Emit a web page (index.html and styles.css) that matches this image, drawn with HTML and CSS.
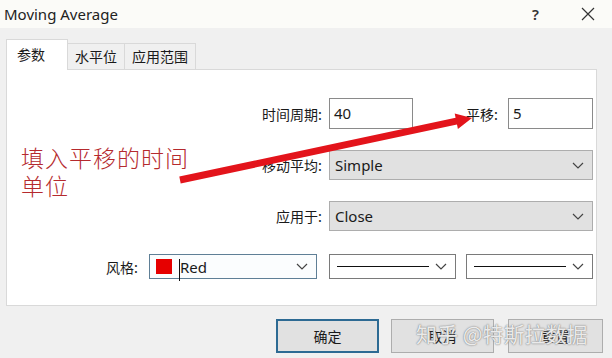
FILE: index.html
```html
<!DOCTYPE html>
<html lang="zh">
<head>
  <meta charset="UTF-8" />
  <title>Moving Average</title>
  <link rel="stylesheet" href="styles.css">
</head>
<body>
  <div class="window">
    <div class="titlebar">
      <span class="title">Moving Average</span>
      <span class="help">?</span>
      <svg class="close" width="14" height="14" viewBox="0 0 14 14">
        <path d="M1 1L13 13M13 1L1 13" stroke="#333" stroke-width="1.2" fill="none"/>
      </svg>
    </div>

    <div class="tabs">
      <div class="tab active">参数</div>
      <div class="tab">水平位</div>
      <div class="tab">应用范围</div>
    </div>

    <div class="panel">
      <div class="form-row">
        <label>时间周期:</label>
        <div class="pair">
          <div class="textbox small">40</div>
          <div class="shift">
            <label>平移:</label>
            <div class="textbox small2">5</div>
          </div>
        </div>
      </div>
      <div class="form-row">
        <label>移动平均:</label>
        <div class="combo">Simple<svg class="chev" width="12" height="7" viewBox="0 0 12 7"><polyline points="1,1 6,6 11,1" fill="none" stroke="#444" stroke-width="1.2"/></svg></div>
      </div>
      <div class="form-row">
        <label>应用于:</label>
        <div class="combo">Close<svg class="chev" width="12" height="7" viewBox="0 0 12 7"><polyline points="1,1 6,6 11,1" fill="none" stroke="#444" stroke-width="1.2"/></svg></div>
      </div>
      <div class="style-row">
        <label>风格:</label>
        <div class="pick color-pick">
          <span class="swatch"></span>
          <span class="caret"></span>
          <span class="pick-text">Red</span>
          <svg class="chev" width="12" height="7" viewBox="0 0 12 7"><polyline points="1,1 6,6 11,1" fill="none" stroke="#444" stroke-width="1.2"/></svg>
        </div>
        <div class="pick line-pick">
          <span class="line"></span>
          <svg class="chev" width="12" height="7" viewBox="0 0 12 7"><polyline points="1,1 6,6 11,1" fill="none" stroke="#444" stroke-width="1.2"/></svg>
        </div>
        <div class="pick line-pick">
          <span class="line"></span>
          <svg class="chev" width="12" height="7" viewBox="0 0 12 7"><polyline points="1,1 6,6 11,1" fill="none" stroke="#444" stroke-width="1.2"/></svg>
        </div>
      </div>
    </div>

    <div class="buttons">
      <button class="btn default">确定</button>
      <button class="btn">取消</button>
      <button class="btn last">重置</button>
    </div>
  </div>

  <!-- annotation drawn over the dialog -->
  <div class="note">填入平移的时间<br>单位</div>
  <svg class="arrow" width="612" height="358" viewBox="0 0 612 358">
    <polygon points="179.3,176.6 455.6,117.8 454.7,113.4 472,118 457.9,129 457,124.6 180.7,183.4" fill="#e3141b"/>
  </svg>
  <div class="watermark">知乎 @特斯拉数据</div>
</body>
</html>
```

FILE: styles.css
```css
* {
  box-sizing: border-box;
}

body {
  margin: 0;
  width: 612px;
  height: 358px;
  overflow: hidden;
  background: #f0f0f0;
  font-family: "Noto Sans", "Noto Sans CJK SC", sans-serif;
  font-size: 14px;
  color: #1a1a1a;
  position: relative;
}

.titlebar {
  height: 28px;
  background: #fbfbf8;
  display: flex;
  align-items: center;
  padding-left: 4px;
}

.title {
  font-size: 15px;
  color: #222;
  flex: 1;
}

.help {
  font-size: 15px;
  font-weight: 600;
  color: #333;
  margin-right: 42px;
}

.close {
  margin-right: 17px;
}

.tabs {
  display: flex;
  align-items: flex-end;
  padding: 11px 0 0 6px;
  height: 41px;
}

.tab {
  height: 26px;
  padding: 0 7px;
  border: 1px solid #d9d9d9;
  border-bottom: none;
  border-left: none;
  background: #f0f0f0;
  font-family: "Noto Sans CJK SC", sans-serif;
  font-size: 14px;
  line-height: 25px;
}

.tab.active {
  width: 62px;
  height: 31px;
  padding-left: 10px;
  border-left: 1px solid #d9d9d9;
  background: #fff;
  margin-bottom: -1px;
  position: relative;
  z-index: 1;
  line-height: 28px;
}

.panel {
  margin: 0 15px 0 6px;
  height: 237px;
  background: #fff;
  border: 1px solid #d9d9d9;
  padding: 28px 3px 0 0;
}

.form-row {
  display: grid;
  grid-template-columns: 1fr 264px;
  column-gap: 7px;
  align-items: center;
  margin-bottom: 21px;
}

.form-row:nth-child(3) {
  margin-bottom: 23px;
}

label {
  text-align: right;
  font-family: "Noto Sans CJK SC", sans-serif;
  font-size: 14px;
}

.pair {
  display: flex;
  justify-content: space-between;
  align-items: center;
}

.shift {
  display: flex;
  align-items: center;
  gap: 10px;
}

.textbox {
  height: 31px;
  border: 1px solid #8a8a8a;
  background: #fff;
  padding-left: 4px;
  font-size: 15px;
  line-height: 28px;
}

.small {
  width: 84px;
}

.small2 {
  width: 85px;
}

.combo {
  height: 30px;
  background: #e1e1e1;
  border: 1px solid #adadad;
  display: flex;
  align-items: center;
  justify-content: space-between;
  padding: 0 8px 0 5px;
  font-size: 15px;
}

.style-row {
  display: flex;
  justify-content: flex-end;
  align-items: center;
}

.style-row label {
  margin-right: 11px;
}

.pick {
  height: 25px;
  border: 1px solid #7a7a7a;
  background: #fff;
  display: flex;
  align-items: center;
  padding: 0 8px 0 6px;
  position: relative;
}

.color-pick {
  width: 168px;
  margin-right: 12px;
  border-color: #5f7f96;
  background: #fbfdfe;
}

.swatch {
  width: 16px;
  height: 15px;
  background: #e60000;
  margin-right: 8px;
}

.caret {
  position: absolute;
  left: 29px;
  top: 4px;
  width: 1px;
  height: 22px;
  background: #111;
}

.pick-text {
  flex: 1;
  font-size: 15px;
}

.line-pick {
  width: 127px;
  justify-content: space-between;
}

.line-pick + .line-pick {
  margin-left: 10px;
}

.line {
  width: 92px;
  height: 1px;
  background: #111;
  margin-left: 1px;
}

.buttons {
  display: flex;
  padding: 13px 0 0 276px;
  gap: 12px;
}

.btn {
  width: 103px;
  height: 34px;
  background: #e1e1e1;
  border: 1px solid #adadad;
  font-family: "Noto Sans CJK SC", sans-serif;
  font-size: 14px;
  color: #1a1a1a;
  padding: 0;
}

.btn.default {
  border: 2px solid #2d6a93;
}

.btn.last {
  width: 95px;
  margin-left: 2px;
}

.note {
  position: absolute;
  left: 21px;
  top: 143px;
  font-family: "Noto Sans CJK SC", serif;
  font-weight: 300;
  font-size: 23px;
  line-height: 28px;
  color: #b52a2e;
  letter-spacing: 1px;
}

.arrow {
  position: absolute;
  left: 0;
  top: 0;
  pointer-events: none;
}

.watermark {
  position: absolute;
  left: 416px;
  top: 318px;
  font-family: "Noto Sans CJK SC", sans-serif;
  font-size: 21px;
  color: rgba(255, 255, 255, 0.85);
  text-shadow: 0 0 1px #777, 0 0 2px #999;
  white-space: nowrap;
}
```
